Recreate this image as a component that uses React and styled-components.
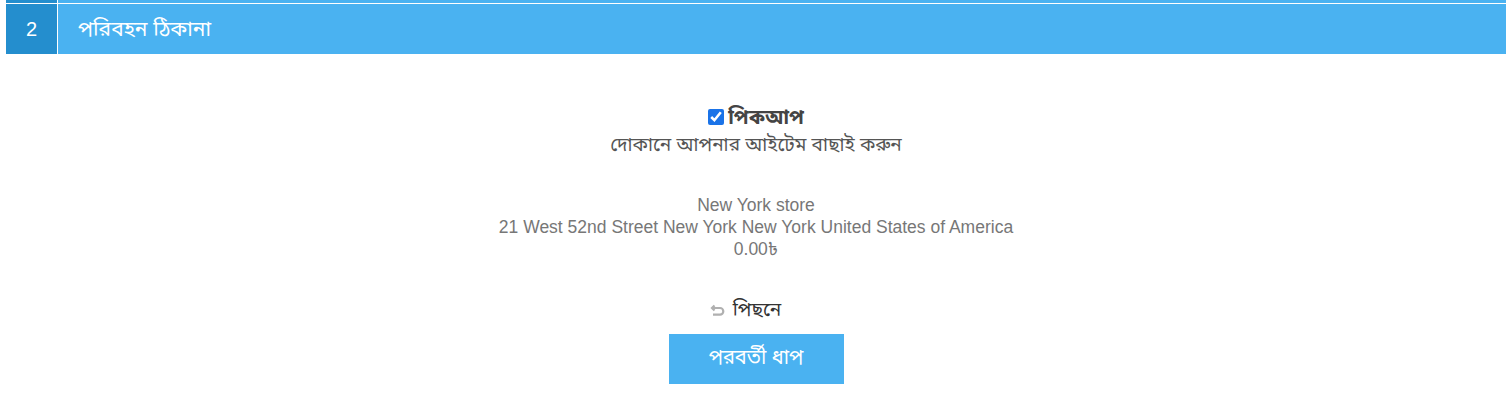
import React from "react";
import styled, { createGlobalStyle } from "styled-components";

const Global = createGlobalStyle`
  html, body { margin: 0; padding: 0; background: #fff; }
  body { font-family: "Liberation Sans", Arial, "Noto Sans Bengali", "Noto Sans", sans-serif; }
`;

const Page = styled.div`
  padding: 0 6px;
`;

const PrevStep = styled.div`
  display: flex;
  height: 3px;
  margin-bottom: 1px;
  background: #4ab2f1;
`;

const StepTitle = styled.div`
  display: flex;
  background: #4ab2f1;
  height: 50px;
`;

const Number = styled.div`
  width: 51px;
  flex: none;
  border-right: 1px solid #fff;
  background: #248ece;
  color: #fff;
  text-align: center;
  line-height: 50px;
  font-size: 20px;
`;

const PrevNumber = styled.div`
  width: 51px;
  flex: none;
  border-right: 1px solid #fff;
  background: #248ece;
`;

const Title = styled.h2`
  margin: 0;
  padding: 0 15px 0 20px;
  color: #fff;
  line-height: 50px;
  font-size: 21px;
  font-weight: normal;
`;

const Content = styled.div`
  display: flex;
  flex-direction: column;
  align-items: center;
  padding-top: 50px;
  text-align: center;
`;

const PickupRow = styled.label`
  display: flex;
  align-items: center;
  gap: 4px;
  font-size: 20px;
  font-weight: bold;
  color: #444;
  line-height: 26px;
`;

const Check = styled.input`
  width: 16px;
  height: 16px;
  margin: 0;
  accent-color: #1a73e8;
`;

const Hint = styled.div`
  font-size: 19px;
  color: #555;
  line-height: 30px;
`;

const Address = styled.div`
  margin-top: 34px;
  color: #777;
  font-size: 17.5px;
  line-height: 22px;
`;

const BackLink = styled.a`
  display: flex;
  align-items: center;
  gap: 8px;
  margin: 37px 21px 0 0;
  color: #333;
  font-size: 19px;
  text-decoration: none;
  line-height: 26px;
`;

const NextButton = styled.button`
  margin-top: 11px;
  width: 175px;
  height: 50px;
  border: none;
  background: #4ab2f1;
  color: #fff;
  font-size: 20px;
  font-family: inherit;
  padding: 0;
`;

export default function App() {
  return (
    <>
      <Global />
      <Page>
        <PrevStep>
          <PrevNumber />
        </PrevStep>
        <StepTitle>
          <Number>2</Number>
          <Title>পরিবহন ঠিকানা</Title>
        </StepTitle>
        <Content>
          <PickupRow>
            <Check type="checkbox" defaultChecked />
            পিকআপ
          </PickupRow>
          <Hint>দোকানে আপনার আইটেম বাছাই করুন</Hint>
          <Address>
            <div>New York store</div>
            <div>21 West 52nd Street New York New York United States of America</div>
            <div>0.00৳</div>
          </Address>
          <BackLink href="#">
            <svg width="15" height="12" viewBox="0 0 15 12" fill="none" stroke="#b0b0b0" strokeWidth="2.2">
              <path d="M4.5 1.5 L2 4 L4.5 6.5" />
              <path d="M2 4 H10 a3.3 3.3 0 0 1 0 6.6 H3" />
            </svg>
            পিছনে
          </BackLink>
          <NextButton>পরবর্তী ধাপ</NextButton>
        </Content>
      </Page>
    </>
  );
}
